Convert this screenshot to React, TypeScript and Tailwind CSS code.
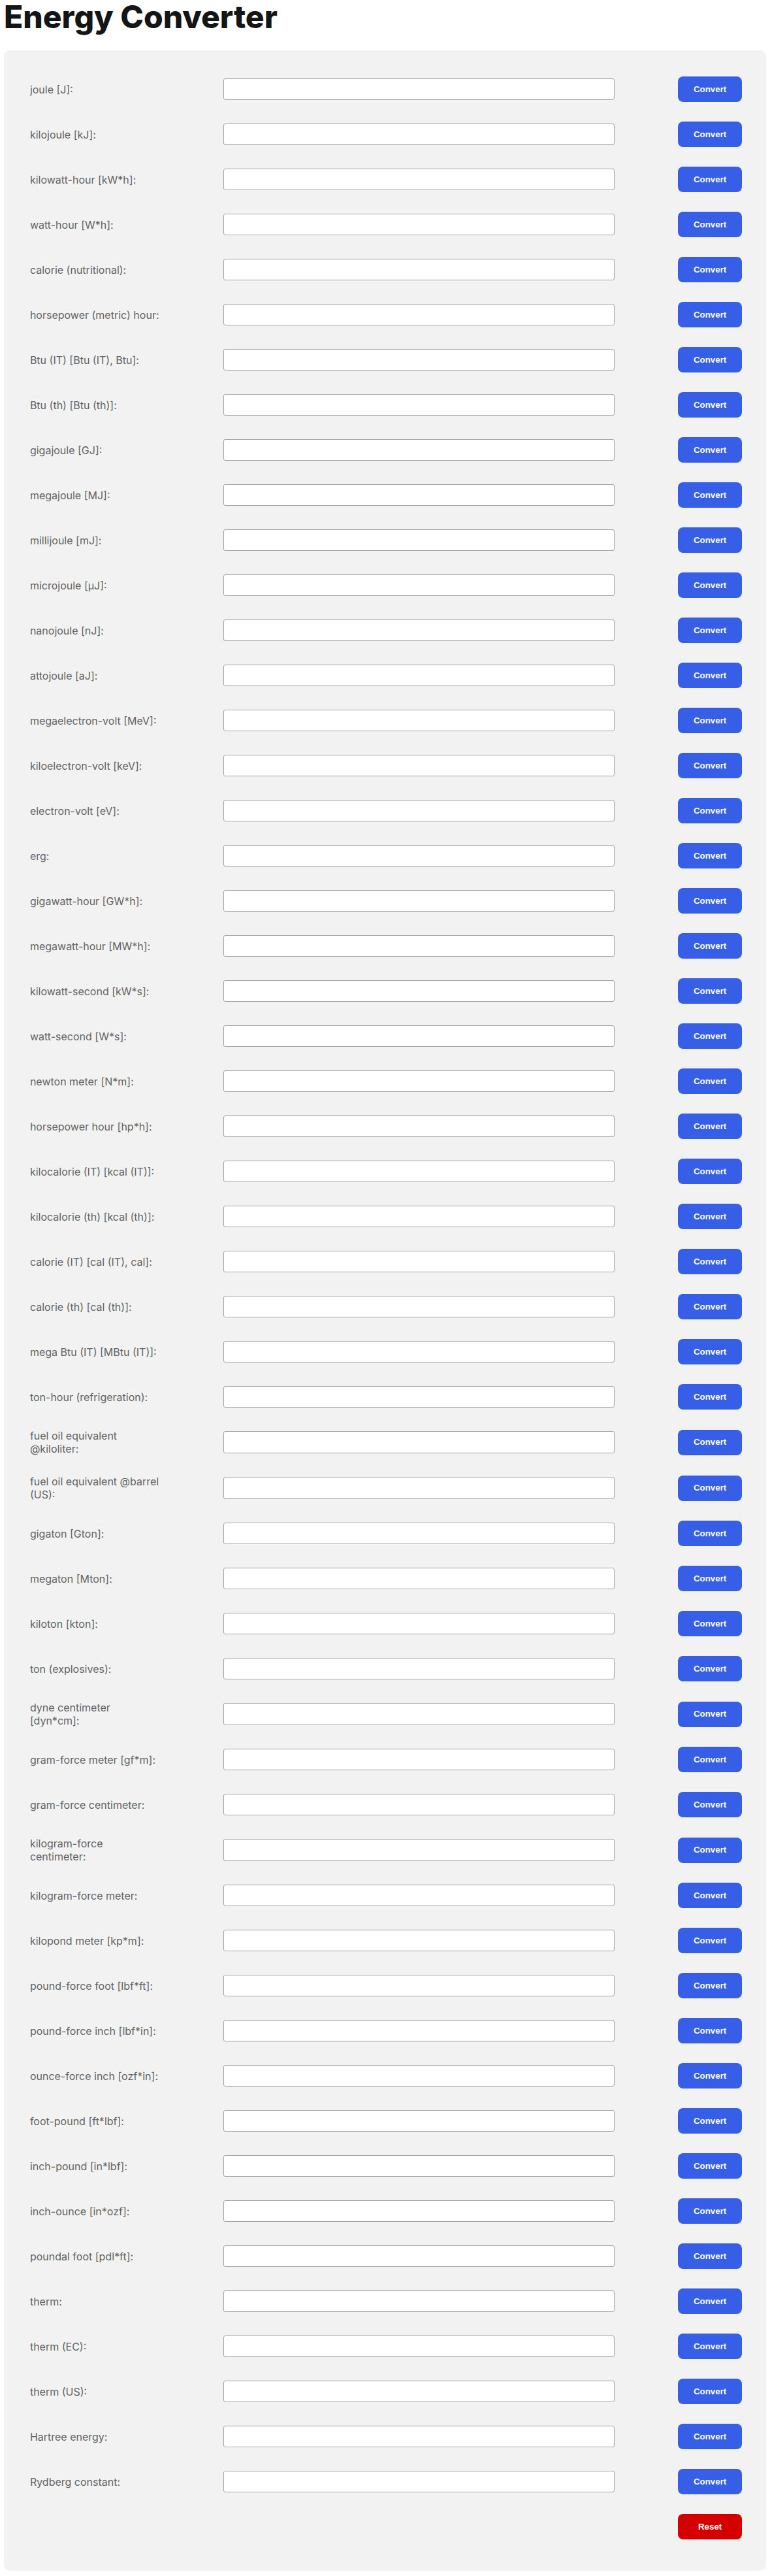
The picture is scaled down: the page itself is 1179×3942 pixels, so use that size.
import React from "react"

const units = [
  "joule [J]:",
  "kilojoule [kJ]:",
  "kilowatt-hour [kW*h]:",
  "watt-hour [W*h]:",
  "calorie (nutritional):",
  "horsepower (metric) hour:",
  "Btu (IT) [Btu (IT), Btu]:",
  "Btu (th) [Btu (th)]:",
  "gigajoule [GJ]:",
  "megajoule [MJ]:",
  "millijoule [mJ]:",
  "microjoule [µJ]:",
  "nanojoule [nJ]:",
  "attojoule [aJ]:",
  "megaelectron-volt [MeV]:",
  "kiloelectron-volt [keV]:",
  "electron-volt [eV]:",
  "erg:",
  "gigawatt-hour [GW*h]:",
  "megawatt-hour [MW*h]:",
  "kilowatt-second [kW*s]:",
  "watt-second [W*s]:",
  "newton meter [N*m]:",
  "horsepower hour [hp*h]:",
  "kilocalorie (IT) [kcal (IT)]:",
  "kilocalorie (th) [kcal (th)]:",
  "calorie (IT) [cal (IT), cal]:",
  "calorie (th) [cal (th)]:",
  "mega Btu (IT) [MBtu (IT)]:",
  "ton-hour (refrigeration):",
  "fuel oil equivalent @kiloliter:",
  "fuel oil equivalent @barrel (US):",
  "gigaton [Gton]:",
  "megaton [Mton]:",
  "kiloton [kton]:",
  "ton (explosives):",
  "dyne centimeter [dyn*cm]:",
  "gram-force meter [gf*m]:",
  "gram-force centimeter:",
  "kilogram-force centimeter:",
  "kilogram-force meter:",
  "kilopond meter [kp*m]:",
  "pound-force foot [lbf*ft]:",
  "pound-force inch [lbf*in]:",
  "ounce-force inch [ozf*in]:",
  "foot-pound [ft*lbf]:",
  "inch-pound [in*lbf]:",
  "inch-ounce [in*ozf]:",
  "poundal foot [pdl*ft]:",
  "therm:",
  "therm (EC):",
  "therm (US):",
  "Hartree energy:",
  "Rydberg constant:",
]

function UnitRow({ label }: { label: string }) {
  return (
    <div className="flex items-center">
      <div className="w-[296.5px] shrink-0">
        <label className="block max-w-[200px] text-[16px] leading-[20px] text-[#636363]">{label}</label>
      </div>
      <input
        type="text"
        className="h-[33.5px] w-[599px] shrink-0 rounded-[3px] border border-[#a3a3a3] bg-white"
      />
      <div className="flex-1" />
      <button className="h-[39px] w-[98px] shrink-0 rounded-[8px] bg-[#365ee6] text-[13.33px] font-bold text-white [font-family:'Liberation_Sans',Arial,sans-serif]">
        Convert
      </button>
    </div>
  )
}

export default function App() {
  return (
    <div className="min-h-screen bg-white pb-[8px] [font-family:Inter,'Noto_Sans',sans-serif]">
      <h1 className="px-[6px] text-[48px] font-extrabold leading-[52px] text-[#151515]">Energy Converter</h1>
      <div className="mx-auto mt-[25px] w-[99%] rounded-[10px] bg-[#f2f2f2] pb-[48px] pl-[40px] pr-[37px] pt-[40px]">
        <div className="flex flex-col gap-[30px]">
          {units.map((u) => (
            <UnitRow key={u} label={u} />
          ))}
          <div className="flex justify-end">
            <button className="h-[39px] w-[98px] rounded-[8px] bg-[#d40000] text-[13.33px] font-bold text-white [font-family:'Liberation_Sans',Arial,sans-serif]">
              Reset
            </button>
          </div>
        </div>
      </div>
    </div>
  )
}
